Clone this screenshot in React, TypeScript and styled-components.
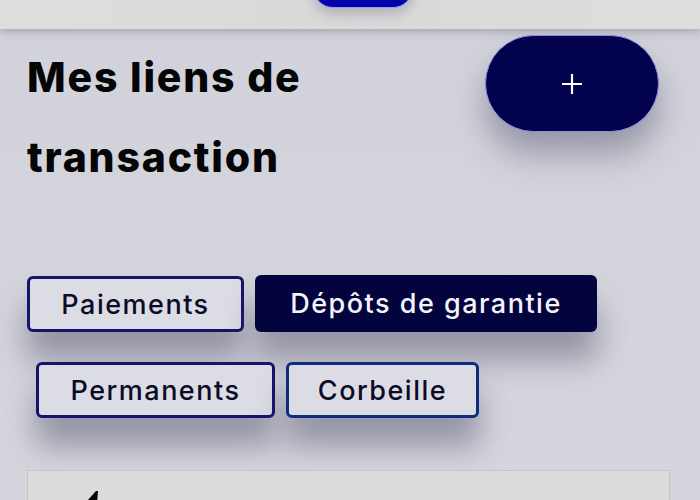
import React from "react";
import styled, { createGlobalStyle } from "styled-components";

const Global = createGlobalStyle`
  html, body { margin: 0; padding: 0; }
  body {
    background: #d4d4dc;
    font-family: Inter, "Noto Sans", "Liberation Sans", sans-serif;
    overflow: hidden;
  }
`;

const Page = styled.div`
  width: 700px;
  height: 500px;
  background: linear-gradient(180deg, #d2d2da 0%, #d5d5dd 100%);
  display: flex;
  flex-direction: column;
  overflow: hidden;
`;

const TopBar = styled.header`
  height: 29px;
  flex: none;
  background: linear-gradient(90deg, #dedede 0%, #d9d9d9 50%, #dedede 100%);
  display: flex;
  justify-content: center;
  align-items: flex-start;
  box-shadow: 0 3px 8px rgba(90, 90, 110, 0.35);
  position: relative;
  z-index: 2;
`;

const TopPill = styled.div`
  width: 100px;
  height: 40px;
  margin-top: -32px;
  margin-left: 25px;
  background: #0202ac;
  border: 1px solid #9c9cf4;
  border-radius: 20px;
  box-sizing: border-box;
  box-shadow: 0 6px 12px rgba(60, 60, 90, 0.25);
`;

const Content = styled.main`
  display: flex;
  flex-direction: column;
  padding: 8px 30px 0 27px;
`;

const TitleRow = styled.div`
  display: flex;
  justify-content: space-between;
  align-items: flex-start;
`;

const Title = styled.h1`
  margin: 0;
  font-size: 41px;
  font-weight: 800;
  line-height: 80px;
  color: #050505;
  letter-spacing: 1.8px;
  width: 320px;
`;

const AddButton = styled.button`
  width: 174px;
  height: 97px;
  margin-top: -2px;
  margin-right: 11px;
  border-radius: 49px;
  background: #02024e;
  border: 1px solid #8f8fe6;
  display: flex;
  align-items: center;
  justify-content: center;
  box-shadow: 0 22px 32px rgba(70, 70, 100, 0.42);
  padding: 0;
`;

const Tabs = styled.div`
  display: flex;
  flex-direction: column;
  gap: 30px;
  margin-top: 79px;
`;

const TabRow = styled.div<{ $indent?: number }>`
  display: flex;
  gap: 11px;
  padding-left: ${(p) => p.$indent ?? 0}px;
`;

const Tab = styled.button<{ $active?: boolean; $w: number; $blue?: boolean }>`
  width: ${(p) => p.$w}px;
  height: ${(p) => (p.$active ? 57 : 56)}px;
  margin-top: ${(p) => (p.$active ? -1 : 0)}px;
  box-sizing: border-box;
  border-radius: 6px;
  border: ${(p) => (p.$active ? "none" : `3px solid ${p.$blue ? "#0f2c7c" : "#14146a"}`)};
  background: ${(p) => (p.$active ? "#03033d" : "#dcdce4")};
  color: ${(p) => (p.$active ? "#f4f4f8" : "#0b0b26")};
  font-family: Inter, "Noto Sans", sans-serif;
  font-size: 27px;
  font-weight: 500;
  letter-spacing: 1.5px;
  display: flex;
  align-items: center;
  justify-content: center;
  padding: 0;
  box-shadow: 0 28px 30px rgba(70, 70, 100, 0.45);
`;

const Card = styled.section`
  margin-top: 52px;
  height: 60px;
  background: #dcdcdc;
  border: 1px solid #cdbfc2;
  box-sizing: border-box;
  padding: 20px 0 0 50px;
`;

export default function App() {
  return (
    <Page>
      <Global />
      <TopBar>
        <TopPill />
      </TopBar>
      <Content>
        <TitleRow>
          <Title>Mes liens de transaction</Title>
          <AddButton aria-label="Ajouter">
            <svg width="22" height="22" viewBox="0 0 22 22">
              <path d="M11 1 V21 M1 11 H21" stroke="#ffffff" strokeWidth="2.2" />
            </svg>
          </AddButton>
        </TitleRow>
        <Tabs>
          <TabRow>
            <Tab $w={217}>Paiements</Tab>
            <Tab $w={342} $active>
              Dépôts de garantie
            </Tab>
          </TabRow>
          <TabRow $indent={9}>
            <Tab $w={239}>Permanents</Tab>
            <Tab $w={193} $blue>
              Corbeille
            </Tab>
          </TabRow>
        </Tabs>
        <Card>
          <svg width="24" height="20" viewBox="0 0 24 20">
            <path d="M18 0 L20 0 L19 12 L0 20 Z" fill="#050505" />
          </svg>
        </Card>
      </Content>
    </Page>
  );
}
